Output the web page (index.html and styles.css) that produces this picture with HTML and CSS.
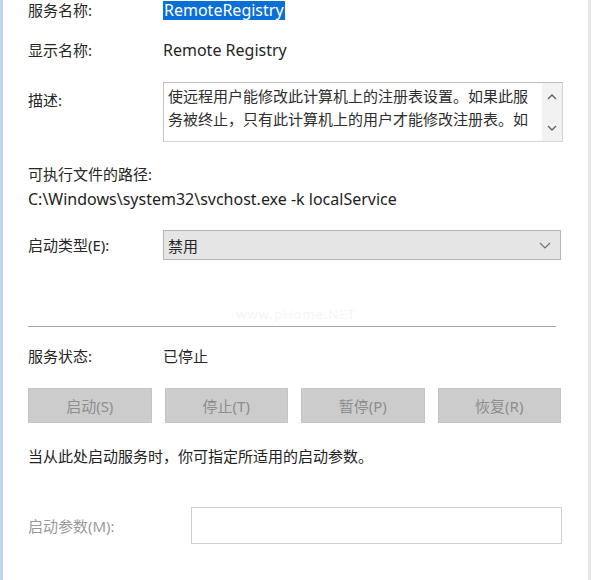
FILE: index.html
```html
<!DOCTYPE html>
<html lang="zh-CN">
<head>
<meta charset="utf-8">
<title>RemoteRegistry 属性</title>
<link rel="stylesheet" href="styles.css">
</head>
<body>
<div class="dialog">
  <div class="row r1">
    <span class="label">服务名称:</span>
    <span class="value"><span class="sel lat">RemoteRegistry</span></span>
  </div>
  <div class="row r2">
    <span class="label">显示名称:</span>
    <span class="value lat">Remote Registry</span>
  </div>
  <div class="row desc">
    <span class="label desc-label">描述:</span>
    <div class="textarea">
      <div class="ta-text">使远程用户能修改此计算机上的注册表设置。如果此服务被终止，只有此计算机上的用户才能修改注册表。如</div>
      <div class="ta-scroll">
        <svg width="10" height="6" viewBox="0 0 10 6"><path d="M1 5 L5 1 L9 5" fill="none" stroke="#606060" stroke-width="1.3"/></svg>
        <svg width="10" height="6" viewBox="0 0 10 6"><path d="M1 1 L5 5 L9 1" fill="none" stroke="#606060" stroke-width="1.3"/></svg>
      </div>
    </div>
  </div>
  <div class="plain path-label">可执行文件的路径:</div>
  <div class="plain path lat">C:\Windows\system32\svchost.exe -k localService</div>
  <div class="row startup">
    <span class="label">启动类型(E):</span>
    <div class="select">
      <span>禁用</span>
      <svg width="12" height="7" viewBox="0 0 12 7"><path d="M1 1 L6 6 L11 1" fill="none" stroke="#707070" stroke-width="1.2"/></svg>
    </div>
  </div>
  <div class="sep-area">
    <span class="watermark">www.pHome.NET</span>
  </div>
  <div class="sep"></div>
  <div class="row status">
    <span class="label">服务状态:</span>
    <span class="value">已停止</span>
  </div>
  <div class="buttons">
    <button class="btn" disabled>启动(S)</button>
    <button class="btn" disabled>停止(T)</button>
    <button class="btn" disabled>暂停(P)</button>
    <button class="btn" disabled>恢复(R)</button>
  </div>
  <div class="plain hint">当从此处启动服务时，你可指定所适用的启动参数。</div>
  <div class="row params">
    <span class="label muted">启动参数(M):</span>
    <div class="input"></div>
  </div>
</div>
</body>
</html>
```
FILE: styles.css
```css
html, body {
  margin: 0;
  padding: 0;
  background: #ffffff;
}
body {
  font-family: "Noto Sans", "Noto Sans CJK SC", sans-serif;
  font-size: 15px;
  color: #262626;
}
.dialog {
  width: 556px;
  height: 580px;
  border-left: 3px solid #bcd6f0;
  border-right: 3px solid #e6e6e6;
  padding-left: 25px;
  padding-right: 4px;
  box-sizing: content-box;
  overflow: hidden;
}
.row {
  display: flex;
  align-items: center;
}
.label {
  width: 135px;
  flex: none;
  line-height: 20px;
}
.value {
  line-height: 20px;
}
.lat {
  font-size: 16px;
}
.r1 { height: 20px; margin-top: 0; }
.sel {
  background: #0a6fd6;
  color: #ffffff;
  padding: 0 1px;
  display: inline-block;
  line-height: 19px;
}
.r2 { height: 20px; margin-top: 20px; }
.desc {
  margin-top: 22px;
  align-items: flex-start;
}
.desc-label { margin-top: 8px; }
.textarea {
  width: 398px;
  height: 58px;
  border: 1px solid #d4d4d4;
  border-top-color: #bdbdbd;
  border-left-color: #c4c4c4;
  display: flex;
  background: #fff;
}
.ta-text {
  flex: 1;
  padding: 2px 0 0 4px;
  line-height: 23px;
  color: #2e2e2e;
  overflow: hidden;
}
.ta-scroll {
  width: 20px;
  background: #f2f2f2;
  display: flex;
  flex-direction: column;
  align-items: center;
  justify-content: space-between;
  padding: 11px 0 10px;
  box-sizing: border-box;
}
.plain { line-height: 20px; }
.path-label { margin-top: 22px; }
.path { margin-top: 5px; color: #1e1e1e; }
.startup { margin-top: 21px; }
.select {
  width: 383px;
  height: 28px;
  border: 1px solid #b4b4b4;
  background: #e5e5e5;
  display: flex;
  align-items: center;
  justify-content: space-between;
  padding: 0 9px 0 4px;
  box-sizing: content-box;
}
.sep-area {
  height: 66px;
  display: flex;
  align-items: flex-end;
  justify-content: center;
  padding-right: 20px;
}
.watermark {
  font-size: 13px;
  color: #f3f6f9;
  letter-spacing: 1px;
  margin-bottom: 3px;
}
.sep {
  width: 528px;
  height: 1px;
  background: #a8a8a8;
}
.status { height: 20px; margin-top: 19px; }
.buttons {
  display: grid;
  grid-template-columns: repeat(4, 1fr);
  gap: 13px;
  width: 533px;
  margin-top: 22px;
}
.btn {
  height: 35px;
  background: #cccccc;
  border: 1px solid #c4c4c4;
  color: #8e8e8e;
  font-family: inherit;
  font-size: 15px;
  padding: 0;
  margin: 0;
}
.hint { margin-top: 23px; color: #222; }
.params { margin-top: 41px; }
.muted { color: #9a9a9a; width: 163px; }
.input {
  width: 369px;
  height: 35px;
  border: 1px solid #cfcfcf;
  background: #fff;
}
```
